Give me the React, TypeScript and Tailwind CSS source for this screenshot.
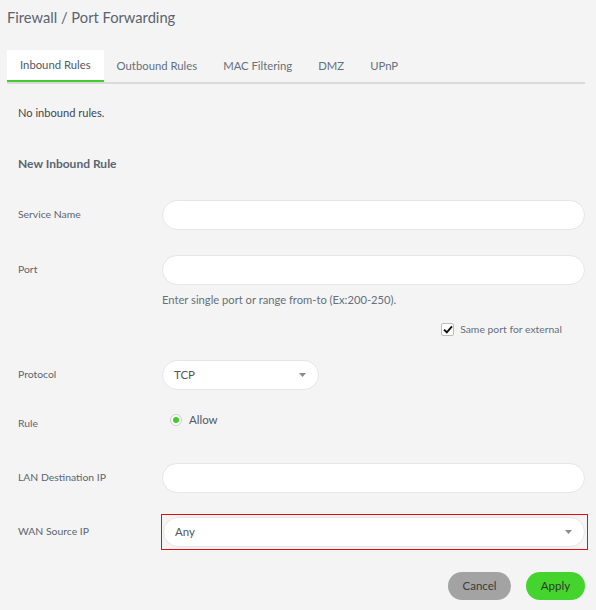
import React from 'react';

const tabs = ['Inbound Rules', 'Outbound Rules', 'MAC Filtering', 'DMZ', 'UPnP'];

const Caret = () => (
  <svg width="7" height="4" viewBox="0 0 7 4" className="shrink-0">
    <path d="M0 0 L7 0 L3.5 4 Z" fill="#8a8a8a" />
  </svg>
);

const TextInput = () => (
  <div className="flex-1 h-[30px] rounded-full bg-white border border-[#e6e6e6]" />
);

export default function App() {
  return (
    <div
      className="w-[596px] h-[610px] bg-[#f4f4f4] text-[#5b6570] overflow-hidden"
      style={{ fontFamily: 'Lato, "Open Sans", sans-serif' }}
    >
      {/* Title */}
      <div className="pt-[7px] pl-[7px] text-[14.7px] leading-[20px] text-[#5a646e]">
        Firewall / Port Forwarding
      </div>

      {/* Tabs */}
      <div className="mt-[23px] ml-[7px] w-[578px] flex border-b-2 border-[#dadada]">
        {tabs.map((t, i) => (
          <div
            key={t}
            className={
              i === 0
                ? 'h-[32px] px-[13px] flex items-center bg-white border-b-2 border-[#3fcc2c] -mb-[2px] text-[11.3px] text-[#4f5a64]'
                : 'h-[32px] px-[13px] flex items-center text-[11.3px] text-[#66707a]'
            }
          >
            {t}
          </div>
        ))}
      </div>

      <div className="pl-[18px] pr-[11px]">
        <div className="mt-[21px] text-[11.1px] leading-[16px] text-[#3f4650]">No inbound rules.</div>

        <div className="mt-[35px] text-[12px] leading-[16px] font-bold text-[#5b6570]">New Inbound Rule</div>

        {/* Service Name */}
        <div className="mt-[28px] flex items-center">
          <div className="w-[144px] text-[10.4px]">Service Name</div>
          <TextInput />
        </div>

        {/* Port */}
        <div className="mt-[25px] flex items-center">
          <div className="w-[144px] text-[10.4px]">Port</div>
          <TextInput />
        </div>
        <div className="mt-[7px] pl-[144px] text-[11.2px] leading-[16px] text-[#66707a]">
          Enter single port or range from-to (Ex:200-250).
        </div>
        <div className="mt-[13px] flex items-center justify-end pr-[23px] gap-[6px]">
          <div className="w-[13px] h-[13px] rounded-[2px] bg-white border border-[#bdbdbd] flex items-center justify-center">
            <svg width="10" height="9" viewBox="0 0 10 9">
              <path d="M1 4.6 L3.8 7.3 L9 1.4" stroke="#111" strokeWidth="1.9" fill="none" />
            </svg>
          </div>
          <span className="text-[10.4px] leading-[16px] text-[#66707a]">Same port for external</span>
        </div>

        {/* Protocol */}
        <div className="mt-[23px] flex items-center">
          <div className="w-[144px] text-[10.4px]">Protocol</div>
          <div className="w-[157px] h-[30px] rounded-full bg-white border border-[#e6e6e6] flex items-center justify-between pl-[11px] pr-[12px]">
            <span className="text-[11.5px] text-[#555]">TCP</span>
            <Caret />
          </div>
        </div>

        {/* Rule */}
        <div className="mt-[18px] h-[30px] flex items-start">
          <div className="w-[144px] mt-[7px] text-[10.4px] leading-[16px]">Rule</div>
          <div className="mt-[4px] ml-[8px] flex items-center gap-[7px]">
            <div className="w-[12px] h-[12px] rounded-full bg-white border border-[#cfcfcf] flex items-center justify-center">
              <div className="w-[6px] h-[6px] rounded-full bg-[#3ccf28]" />
            </div>
            <span className="text-[11.5px] leading-[16px] text-[#4f5a64]">Allow</span>
          </div>
        </div>

        {/* LAN Destination IP */}
        <div className="mt-[25px] flex items-center">
          <div className="w-[144px] text-[10.4px]">LAN Destination IP</div>
          <TextInput />
        </div>

        {/* WAN Source IP */}
        <div className="mt-[21px] flex items-center">
          <div className="w-[143px] shrink-0 text-[10.4px]">WAN Source IP</div>
          <div className="w-[427px] shrink-0 border border-[#e01010] pl-[1px] pr-[2px] py-[2px]">
            <div className="h-[30px] rounded-full bg-white border border-[#e6e6e6] flex items-center justify-between pl-[11px] pr-[12px]">
              <span className="text-[11.5px] text-[#555]">Any</span>
              <Caret />
            </div>
          </div>
        </div>

        {/* Buttons */}
        <div className="mt-[22px] flex justify-end gap-[15px]">
          <button className="w-[63px] h-[28px] rounded-full bg-[#a3a3a3] text-[11.5px] text-[#3a3a3a]">Cancel</button>
          <button className="w-[59px] h-[28px] rounded-full bg-[#45d42e] text-[11.5px] text-[#2c3a2a]">Apply</button>
        </div>
      </div>
    </div>
  );
}
